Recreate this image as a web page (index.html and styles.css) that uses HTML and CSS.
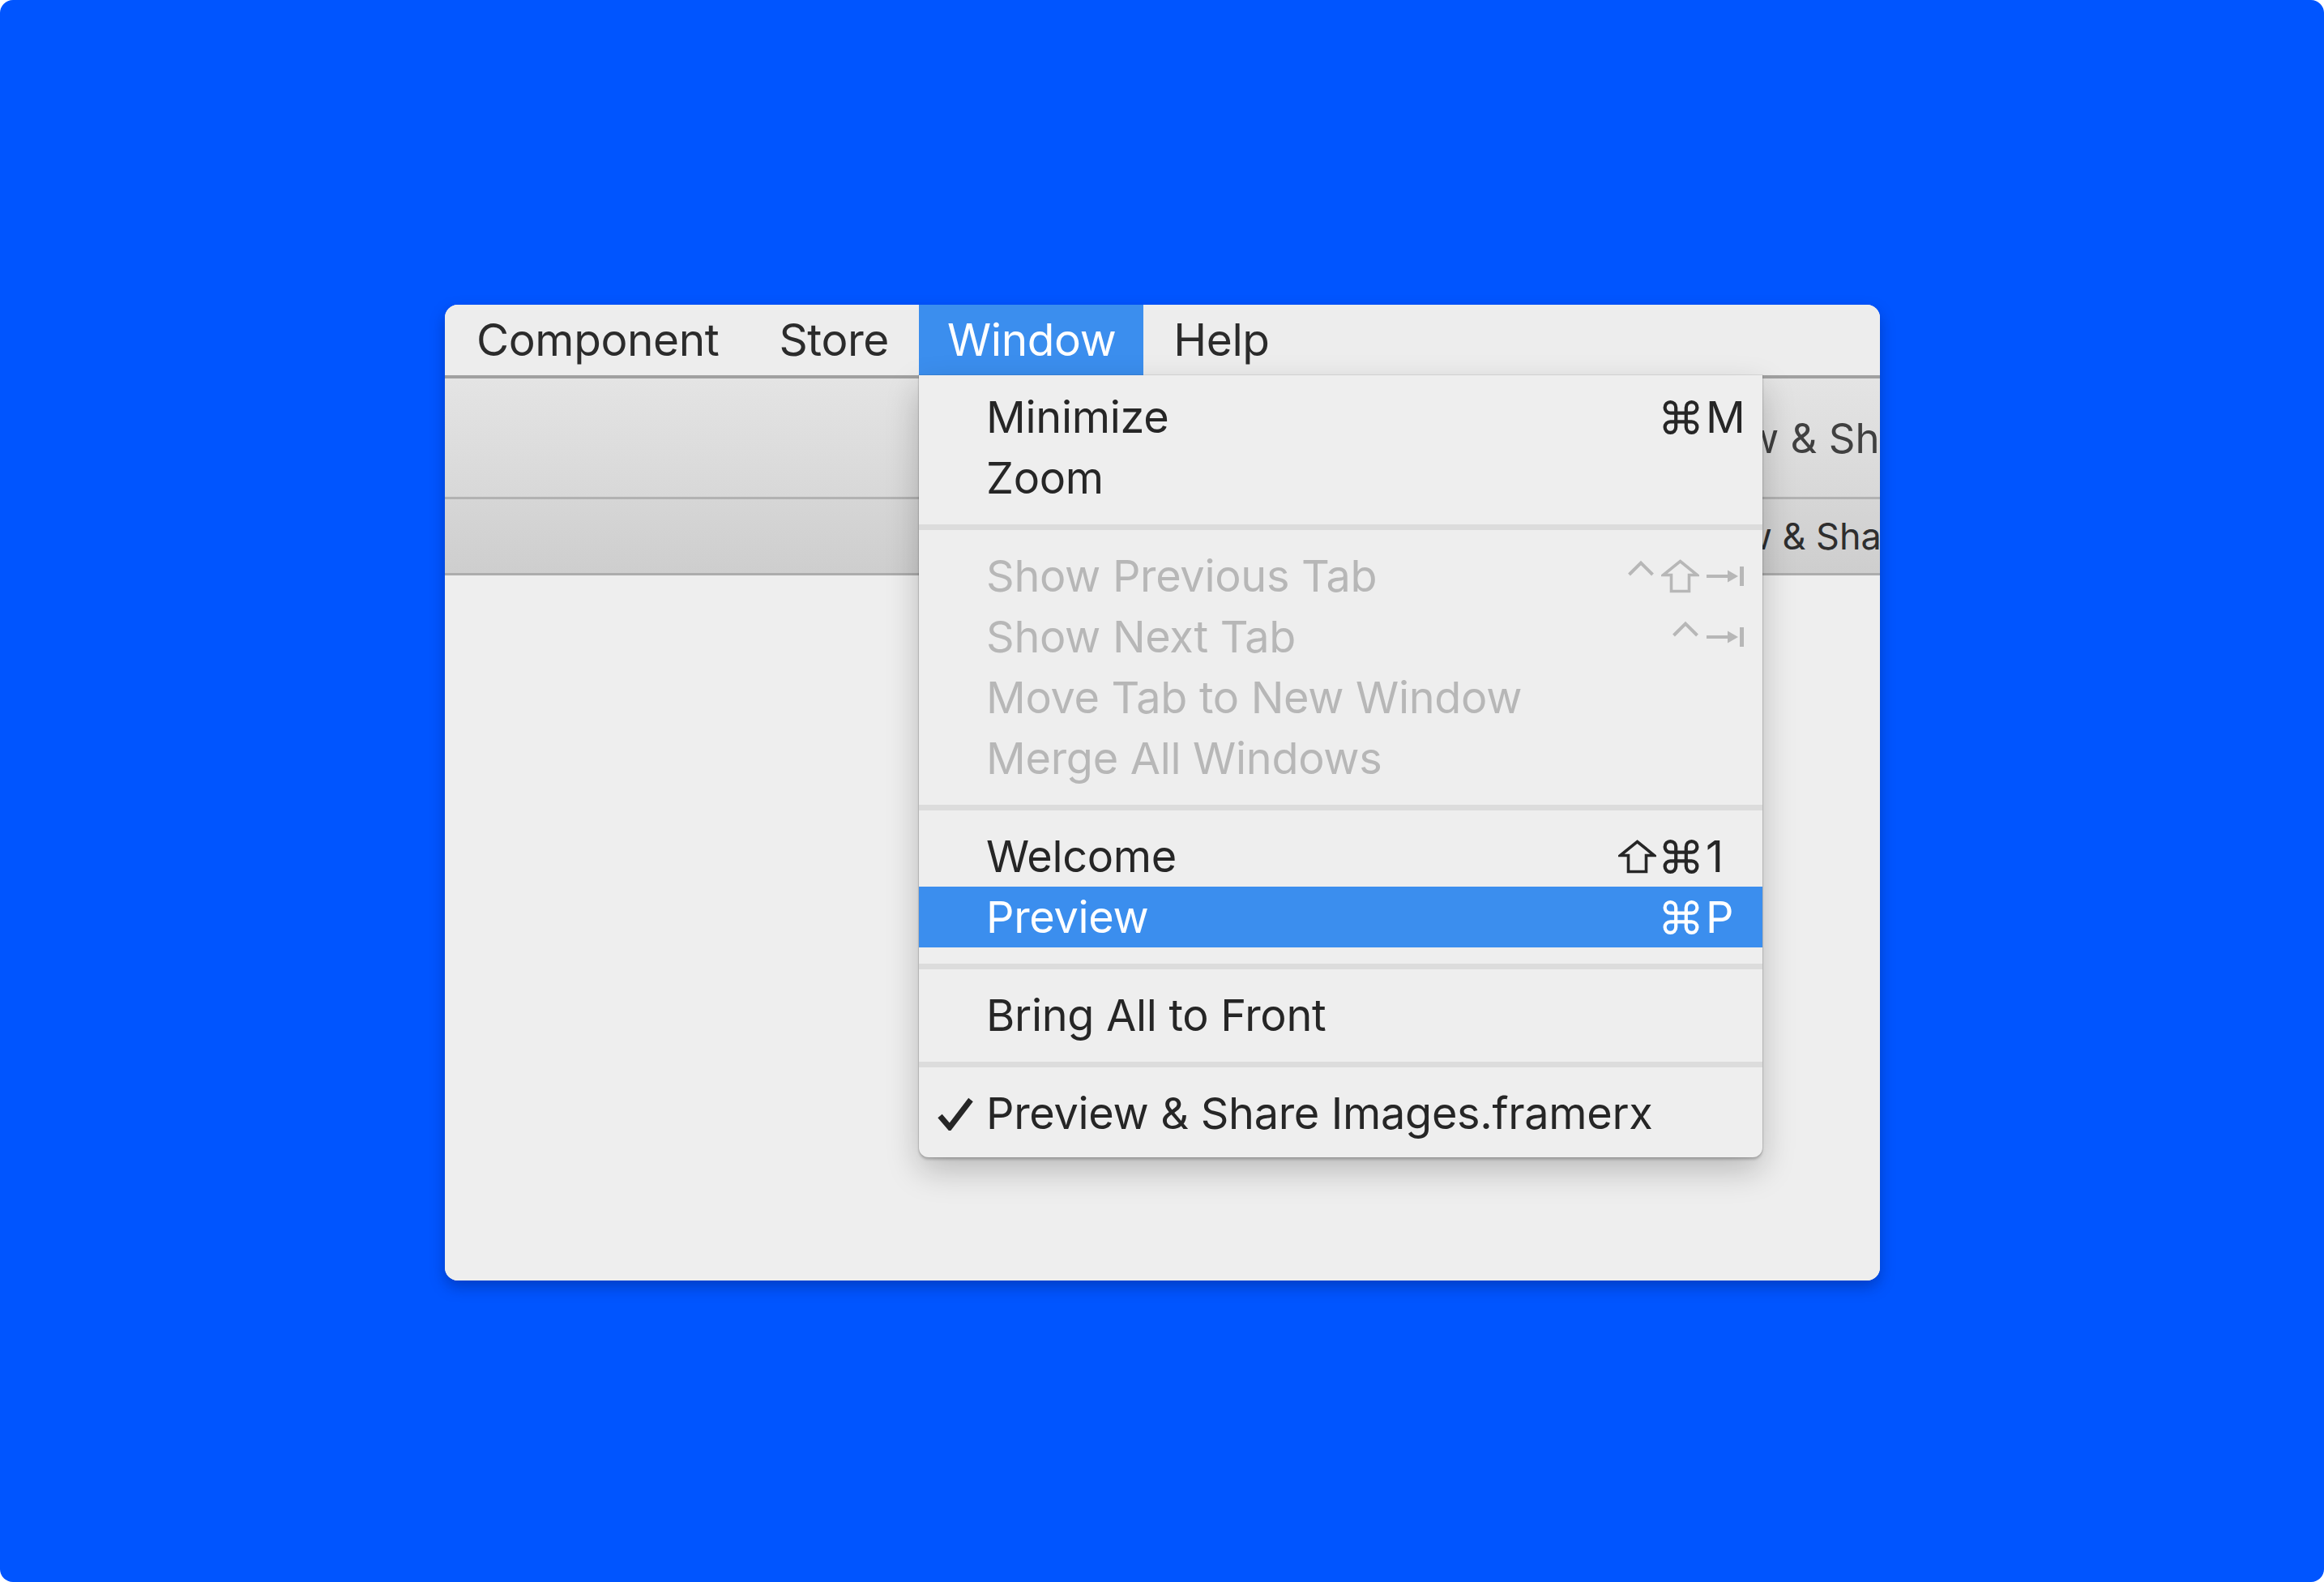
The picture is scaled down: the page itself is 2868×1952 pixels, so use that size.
FILE: index.html
```html
<!DOCTYPE html>
<html lang="en">
<head>
<meta charset="utf-8">
<title>Window menu</title>
<link rel="stylesheet" href="styles.css">
</head>
<body>
<div class="stage">
  <div class="window">
    <div class="menubar">
      <div class="mb-item">Component</div>
      <div class="mb-item">Store</div>
      <div class="mb-item active">Window
        <div class="menu">
          <div class="row">
            <span class="check"></span><span class="label">Minimize</span>
            <span class="mods">
              <svg class="k-cmd" width="45" height="42" viewBox="0 0 44 42"><path d="M15.7 8.9V33.1M28.3 8.9V33.1M8.9 15.7H35.1M8.9 26.3H35.1M15.7 8.9A6.8 6.8 0 1 0 8.9 15.7M35.1 15.7A6.8 6.8 0 1 0 28.3 8.9M28.3 33.1A6.8 6.8 0 1 0 35.1 26.3M8.9 26.3A6.8 6.8 0 1 0 15.7 33.1"/></svg>
            </span>
            <span class="key">M</span>
          </div>
          <div class="row"><span class="check"></span><span class="label">Zoom</span></div>
          <div class="sep"></div>
          <div class="row disabled">
            <span class="check"></span><span class="label">Show Previous Tab</span>
            <span class="mods">
              <svg class="k-ctrl" width="34" height="42" viewBox="0 0 34 42"><path d="M2.5 19L17 4.5L31.5 19"/></svg>
              <svg class="k-shift" width="47" height="42" viewBox="0 0 47 42"><path d="M23.5 2.5L44.5 19.5H34.5V39.5H12.5V19.5H2.5Z"/></svg>
            </span>
            <span class="key"><svg class="k-tab" width="48" height="42" viewBox="0 0 48 42"><path class="ln" d="M1 21H30"/><path class="fl" d="M27 13.5L40 21L27 28.5Z"/><rect class="fl" x="42" y="9" width="5" height="24"/></svg></span>
          </div>
          <div class="row disabled">
            <span class="check"></span><span class="label">Show Next Tab</span>
            <span class="mods">
              <svg class="k-ctrl" width="34" height="42" viewBox="0 0 34 42"><path d="M2.5 19L17 4.5L31.5 19"/></svg>
            </span>
            <span class="key"><svg class="k-tab" width="48" height="42" viewBox="0 0 48 42"><path class="ln" d="M1 21H30"/><path class="fl" d="M27 13.5L40 21L27 28.5Z"/><rect class="fl" x="42" y="9" width="5" height="24"/></svg></span>
          </div>
          <div class="row disabled"><span class="check"></span><span class="label">Move Tab to New Window</span></div>
          <div class="row disabled"><span class="check"></span><span class="label">Merge All Windows</span></div>
          <div class="sep"></div>
          <div class="row">
            <span class="check"></span><span class="label">Welcome</span>
            <span class="mods">
              <svg class="k-shift" width="47" height="42" viewBox="0 0 47 42"><path d="M23.5 2.5L44.5 19.5H34.5V39.5H12.5V19.5H2.5Z"/></svg>
              <svg class="k-cmd" width="45" height="42" viewBox="0 0 44 42"><path d="M15.7 8.9V33.1M28.3 8.9V33.1M8.9 15.7H35.1M8.9 26.3H35.1M15.7 8.9A6.8 6.8 0 1 0 8.9 15.7M35.1 15.7A6.8 6.8 0 1 0 28.3 8.9M28.3 33.1A6.8 6.8 0 1 0 35.1 26.3M8.9 26.3A6.8 6.8 0 1 0 15.7 33.1"/></svg>
            </span>
            <span class="key">1</span>
          </div>
          <div class="row selected">
            <span class="check"></span><span class="label">Preview</span>
            <span class="mods">
              <svg class="k-cmd" width="45" height="42" viewBox="0 0 44 42"><path d="M15.7 8.9V33.1M28.3 8.9V33.1M8.9 15.7H35.1M8.9 26.3H35.1M15.7 8.9A6.8 6.8 0 1 0 8.9 15.7M35.1 15.7A6.8 6.8 0 1 0 28.3 8.9M28.3 33.1A6.8 6.8 0 1 0 35.1 26.3M8.9 26.3A6.8 6.8 0 1 0 15.7 33.1"/></svg>
            </span>
            <span class="key">P</span>
          </div>
          <div class="sep"></div>
          <div class="row"><span class="check"></span><span class="label">Bring All to Front</span></div>
          <div class="sep"></div>
          <div class="row"><span class="check"><svg width="44" height="42" viewBox="0 0 44 42"><path class="tick" d="M3 24L15 38L41 4"/></svg></span><span class="label">Preview &amp; Share Images.framerx</span></div>
        </div>
      </div>
      <div class="mb-item">Help</div>
    </div>
    <div class="toolbar"><span class="tb-title">Preview &amp; Share Images.framerx</span></div>
    <div class="tabbar"><span class="tab-title">Preview &amp; Share Images.framerx</span></div>
    <div class="content"></div>
  </div>
</div>
</body>
</html>
```
FILE: styles.css
```css
html, body {
  margin: 0;
  padding: 0;
  background: #ffffff;
}

.stage {
  width: 2868px;
  height: 1952px;
  background: #0055ff;
  border-radius: 16px;
  padding: 376px 0 0 549px;
  box-sizing: border-box;
}

.window {
  width: 1771px;
  height: 1204px;
  background: #eeeeee;
  border-radius: 16px;
  overflow: hidden;
  box-shadow: 0 8px 18px rgba(0, 20, 90, 0.35);
  display: flex;
  flex-direction: column;
  font-family: Inter, "Noto Sans", sans-serif;
}

.menubar {
  flex: none;
  height: 87px;
  display: flex;
  padding-left: 2px;
  background: #ededed;
}

.mb-item {
  position: relative;
  padding: 0 37px;
  font-size: 55px;
  letter-spacing: -0.4px;
  line-height: 87px;
  color: #2b2b2b;
  white-space: nowrap;
}

.mb-item.active {
  padding: 0 34px 0 35px;
  background: #3b8eee;
  color: #ffffff;
}

.toolbar {
  flex: none;
  height: 146px;
  border-top: 4px solid #a0a0a0;
  border-bottom: 3px solid #b2b2b2;
  background: linear-gradient(#e4e4e4, #d8d8d8);
  display: flex;
  align-items: center;
  white-space: nowrap;
}

.tb-title {
  margin-left: 1455px;
  font-size: 51px;
  color: #404040;
}

.tabbar {
  flex: none;
  height: 91px;
  border-bottom: 3px solid #acacac;
  background: linear-gradient(#d6d6d6, #cecece);
  display: flex;
  align-items: center;
  white-space: nowrap;
}

.tab-title {
  margin-left: 1469px;
  font-size: 45px;
  color: #2e2e2e;
}

.content {
  flex: 1;
  background: #eeeeee;
}

/* dropdown menu */
.menu {
  position: absolute;
  top: 100%;
  left: 0;
  z-index: 10;
  width: 1041px;
  padding: 14px 0 17px;
  background: #eeeeee;
  border-radius: 0 0 12px 12px;
  box-shadow: 0 0 0 1px rgba(0, 0, 0, 0.08), 0 3px 3px rgba(0, 0, 0, 0.18), 0 16px 40px rgba(0, 0, 0, 0.22);
  color: #262626;
  line-height: normal;
  letter-spacing: -0.3px;
}

.row {
  display: flex;
  align-items: center;
  height: 75px;
  padding: 0 22px 0 23px;
  font-size: 54px;
}

.row.disabled {
  color: #b7b7b7;
}

.row.selected {
  background: #3b8eee;
  color: #ffffff;
}

.check {
  flex: none;
  width: 60px;
  display: flex;
  align-items: center;
}

.check svg {
  display: block;
}

.tick {
  fill: none;
  stroke: #262626;
  stroke-width: 7;
}

.label {
  flex: 1;
  white-space: nowrap;
}

.mods {
  display: flex;
  align-items: center;
  justify-content: flex-end;
  gap: 8px;
}

.mods svg,
.key svg {
  display: block;
}

.k-cmd path,
.k-ctrl path,
.k-shift path {
  fill: none;
  stroke: currentColor;
}

.k-cmd path {
  stroke-width: 4.2;
}

.k-ctrl path {
  stroke-width: 4;
}

.k-shift path {
  stroke-width: 3.6;
}

.k-tab .ln {
  fill: none;
  stroke: currentColor;
  stroke-width: 4;
}

.k-tab .fl {
  fill: currentColor;
}

.key {
  flex: none;
  width: 48px;
  margin-left: 8px;
  display: flex;
  align-items: center;
}

.sep {
  height: 7px;
  margin: 20px 0 19px;
  background: #dcdcdc;
}
```
